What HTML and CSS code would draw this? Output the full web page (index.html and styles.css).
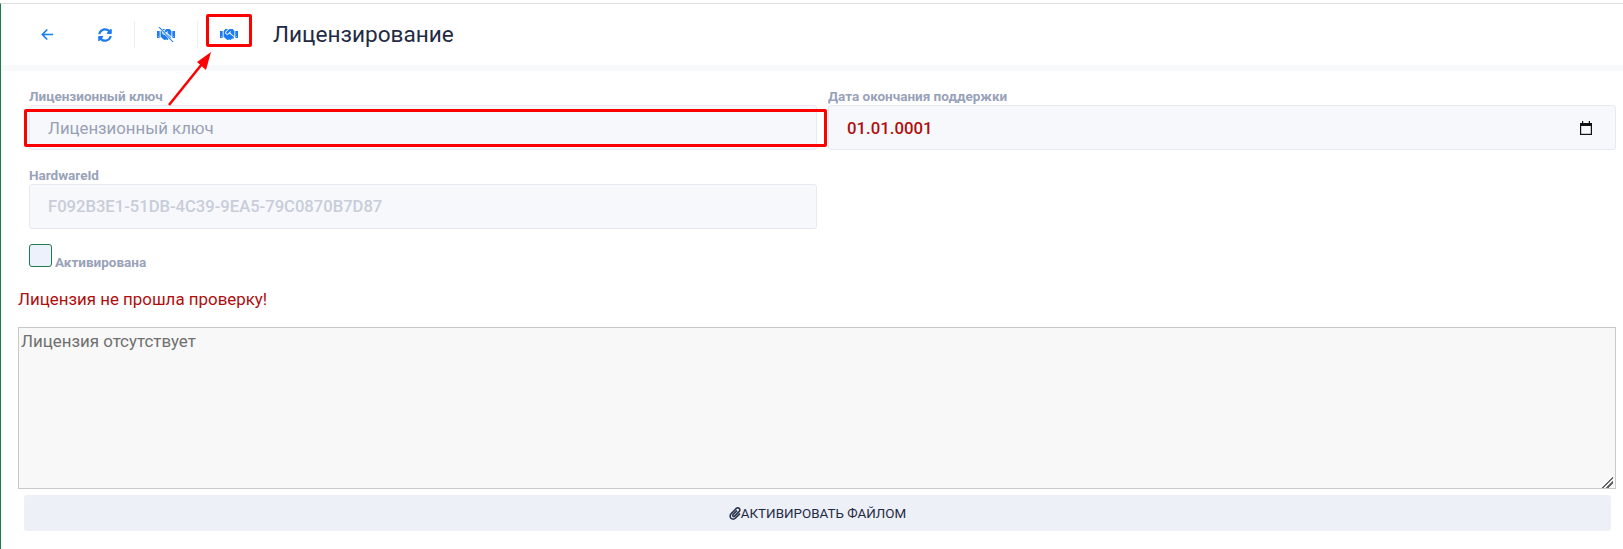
FILE: index.html
```html
<!DOCTYPE html>
<html lang="ru">
<head>
<meta charset="utf-8">
<title>Лицензирование</title>
<link rel="stylesheet" href="styles.css">
</head>
<body>
<div class="app">
  <header class="toolbar">
    <button class="tool tool-plain" type="button" aria-label="Назад">
      <svg class="icon-arrow" viewBox="0 0 12 12"><path d="M11.2 6H1.4M5.8 1.4 1.2 6l4.6 4.6"/></svg>
    </button>
    <button class="tool tool-plain" type="button" aria-label="Обновить">
      <svg class="icon-sync" viewBox="0 0 512 512"><path d="M370.72 133.28C339.458 104.008 298.888 87.962 255.848 88c-77.458.068-144.328 53.178-162.791 126.85-1.344 5.363-6.122 9.15-11.651 9.15H24.103c-7.498 0-13.194-6.807-11.807-14.176C33.933 94.924 134.813 8 256 8c66.448 0 126.791 26.136 171.315 68.685L463.03 40.97C478.149 25.851 504 36.559 504 57.941V192c0 13.255-10.745 24-24 24H345.941c-21.382 0-32.09-25.851-16.971-40.971l41.75-41.749zM32 296h134.059c21.382 0 32.09 25.851 16.971 40.971l-41.75 41.75c31.262 29.273 71.835 45.319 114.876 45.28 77.418-.07 144.315-53.144 162.787-126.849 1.344-5.363 6.122-9.15 11.651-9.15h57.304c7.498 0 13.193 6.807 11.807 14.176C478.067 417.076 377.187 504 256 504c-66.448 0-126.791-26.136-171.315-68.685L48.97 471.03C33.851 486.149 8 475.441 8 454.059V320c0-13.255 10.745-24 24-24z"/></svg>
    </button>
    <span class="sep"></span>
    <button class="tool tool-wide" type="button" aria-label="Деактивировать">
      <svg class="icon-hand" viewBox="0 0 640 512">
        <path d="M434.7 64h-85.9c-8 0-15.7 3-21.6 8.4l-98.3 90c-.1.1-.2.3-.3.4-16.6 15.6-16.3 40.5-2.1 56 12.7 13.9 39.4 17.6 56.1 2.7.1-.1.3-.1.4-.2l79.9-73.2c6.5-5.9 16.7-5.5 22.6 1 6 6.5 5.5 16.6-1 22.6l-26.1 23.9L504 313.8c2.9 2.4 5.5 5 7.9 7.7V128l-54.6-54.6c-5.9-6-14.1-9.4-22.6-9.4zM544 128.2v223.9c0 17.7 14.3 32 32 32h64V128.2h-96zm48 223.9c-8.8 0-16-7.2-16-16s7.2-16 16-16 16 7.2 16 16-7.2 16-16 16zM0 384h64c17.7 0 32-14.3 32-32V128.2H0V384zm48-63.9c8.8 0 16 7.2 16 16s-7.2 16-16 16-16-7.2-16-16c0-8.9 7.2-16 16-16zm435.9 18.6L334.6 217.5l-30 27.5c-29.7 27.1-75.2 24.5-101.7-4.4-26.9-29.4-24.8-74.9 4.4-101.7L289.1 64h-83.8c-8.5 0-16.6 3.4-22.6 9.4L128 128v223.9h18.3l90.5 81.9c27.4 22.3 67.7 18.1 90-9.3l.2-.2 17.9 15.5c15.9 13 39.4 10.5 52.3-5.4l31.4-38.6 5.4 4.4c13.7 11.1 33.9 9.1 45-4.7l9.5-11.7c11.2-13.8 9.1-33.9-4.6-45.1z"/>
        <path class="slash-halo" d="M60-20 580 532"/>
        <path class="slash" d="M60-20 580 532"/>
      </svg>
    </button>
    <span class="sep"></span>
    <button class="tool tool-wide" type="button" aria-label="Активировать">
      <svg class="icon-hand" viewBox="0 0 640 512"><path d="M434.7 64h-85.9c-8 0-15.7 3-21.6 8.4l-98.3 90c-.1.1-.2.3-.3.4-16.6 15.6-16.3 40.5-2.1 56 12.7 13.9 39.4 17.6 56.1 2.7.1-.1.3-.1.4-.2l79.9-73.2c6.5-5.9 16.7-5.5 22.6 1 6 6.5 5.5 16.6-1 22.6l-26.1 23.9L504 313.8c2.9 2.4 5.5 5 7.9 7.7V128l-54.6-54.6c-5.9-6-14.1-9.4-22.6-9.4zM544 128.2v223.9c0 17.7 14.3 32 32 32h64V128.2h-96zm48 223.9c-8.8 0-16-7.2-16-16s7.2-16 16-16 16 7.2 16 16-7.2 16-16 16zM0 384h64c17.7 0 32-14.3 32-32V128.2H0V384zm48-63.9c8.8 0 16 7.2 16 16s-7.2 16-16 16-16-7.2-16-16c0-8.9 7.2-16 16-16zm435.9 18.6L334.6 217.5l-30 27.5c-29.7 27.1-75.2 24.5-101.7-4.4-26.9-29.4-24.8-74.9 4.4-101.7L289.1 64h-83.8c-8.5 0-16.6 3.4-22.6 9.4L128 128v223.9h18.3l90.5 81.9c27.4 22.3 67.7 18.1 90-9.3l.2-.2 17.9 15.5c15.9 13 39.4 10.5 52.3-5.4l31.4-38.6 5.4 4.4c13.7 11.1 33.9 9.1 45-4.7l9.5-11.7c11.2-13.8 9.1-33.9-4.6-45.1z"/></svg>
    </button>
    <h1 class="title">Лицензирование</h1>
  </header>
  <div class="strip"></div>
  <main class="content">
    <div class="form-grid">
      <div class="field">
        <label class="field-label">Лицензионный ключ</label>
        <input class="field-input" type="text" placeholder="Лицензионный ключ">
      </div>
      <div class="field">
        <label class="field-label">Дата окончания поддержки</label>
        <div class="field-input date-input">
          <span>01.01.0001</span>
          <svg class="icon-cal" viewBox="0 0 14 14"><path class="cal-fill" d="M3 0h1.2v2H9.8V0H11v2h2v12H1V2h2z"/><rect class="cal-body" x="2.2" y="5" width="9.6" height="7.8"/></svg>
        </div>
      </div>
      <div class="field">
        <label class="field-label">HardwareId</label>
        <input class="field-input hardware" type="text" value="F092B3E1-51DB-4C39-9EA5-79C0870B7D87" disabled>
      </div>
    </div>
    <div class="check-row">
      <span class="check-box"></span>
      <span class="check-label">Активирована</span>
    </div>
    <p class="error">Лицензия не прошла проверку!</p>
    <textarea class="details" disabled>Лицензия отсутствует</textarea>
    <button class="activate" type="button">
      <svg class="icon-clip" viewBox="0 0 448 512"><path d="M43.246 466.142c-58.43-60.289-57.341-157.511 1.386-217.581L254.392 34c44.316-45.332 116.351-45.336 160.671 0 43.89 44.894 43.943 117.329 0 162.276L232.214 383.128c-29.855 30.537-78.633 30.111-107.982-.998-28.275-29.97-27.368-77.473 1.452-106.953l143.743-146.835c6.182-6.314 16.312-6.422 22.626-.241l22.861 22.379c6.315 6.182 6.422 16.312.241 22.626L171.427 319.927c-4.932 5.045-5.236 13.428-.648 18.292 4.372 4.634 11.245 4.711 15.688.165l182.849-186.851c19.613-20.062 19.613-52.725-.011-72.798-19.189-19.627-49.957-19.637-69.154 0L90.39 293.295c-34.763 35.56-35.299 93.12-1.191 128.313 34.01 35.093 88.985 35.137 123.058.286l172.06-175.999c6.177-6.319 16.307-6.433 22.626-.256l22.877 22.364c6.319 6.177 6.434 16.307.256 22.626l-172.06 175.998c-59.576 60.938-155.943 60.216-214.77-.485z"/></svg>АКТИВИРОВАТЬ ФАЙЛОМ
    </button>
  </main>
  <div class="mark mark-tool"></div>
  <div class="mark mark-key"></div>
  <svg class="mark-arrow" viewBox="0 0 60 70"><path class="arrow-line" d="M8 60 41 19"/><path class="arrow-head" d="M50 7 45 25 36 17z"/></svg>
</div>
</body>
</html>
```

FILE: styles.css
```css
* {
  box-sizing: border-box;
}

html,
body {
  margin: 0;
  height: 100%;
  background: #fff;
}

body {
  padding-top: 3px;
  font-family: Roboto, "Liberation Sans", sans-serif;
  overflow: hidden;
}

.app {
  position: relative;
  height: 546px;
  border-top: 1px solid #e0e0e0;
  border-left: 1px solid #1f7a4d;
}

.toolbar {
  display: flex;
  align-items: center;
  height: 61px;
  padding: 0 0 0 17px;
}

.tool {
  display: flex;
  align-items: center;
  justify-content: center;
  height: 28px;
  padding: 0;
  border: 0;
  background: transparent;
  cursor: pointer;
}

.tool-plain {
  width: 58px;
}

.tool-wide {
  width: 62px;
}

.tool svg {
  fill: #1a7cf0;
}

.tool .icon-arrow {
  width: 13px;
  height: 13px;
  fill: none;
  stroke: #1a7cf0;
  stroke-width: 1.5;
}

.icon-sync {
  width: 14px;
  height: 14px;
}

.icon-hand {
  width: 18px;
  height: 15px;
}

.slash-halo {
  fill: none;
  stroke: #fff;
  stroke-width: 75;
}

.slash {
  fill: none;
  stroke: #1a7cf0;
  stroke-width: 38;
}

.sep {
  width: 1px;
  height: 27px;
  background: #eceef2;
}

.title {
  margin: 0 0 0 13px;
  font-size: 22.6px;
  font-weight: 400;
  line-height: 28px;
  color: #1f2a44;
}

.strip {
  height: 6px;
  background: #f8f9fa;
}

.content {
  display: flex;
  flex-direction: column;
  align-items: flex-start;
  padding: 16px 0 0 17px;
}

.form-grid {
  display: grid;
  grid-template-columns: 788px 788px;
  column-gap: 11px;
  row-gap: 16px;
  margin-left: 11px;
}

.field {
  display: flex;
  flex-direction: column;
}

.field-label {
  height: 18px;
  font-size: 13.5px;
  font-weight: 700;
  line-height: 19px;
  color: #98a2b8;
}

.field-input {
  width: 100%;
  height: 45px;
  padding: 0 18px;
  border: 1px solid #e6e9f2;
  border-radius: 3px;
  background: #f7f8fc;
  font-family: inherit;
  font-size: 16.8px;
  color: #1f2a44;
  outline: none;
}

.field-input::placeholder {
  color: #98a1b3;
  opacity: 1;
}

.field-input:disabled {
  color: #c8cdd9;
}

.hardware {
  font-size: 16.6px;
  font-weight: 500;
}

.date-input {
  display: flex;
  align-items: center;
  justify-content: space-between;
  padding-right: 22px;
  font-weight: 500;
  color: #b00d0d;
}

.icon-cal {
  width: 14px;
  height: 14px;
}

.cal-fill {
  fill: #111;
}

.cal-body {
  fill: #f7f8fc;
}

.check-row {
  display: flex;
  align-items: flex-end;
  gap: 3px;
  margin: 15px 0 0 11px;
}

.check-box {
  width: 23px;
  height: 23px;
  border: 1px solid #1f7a4d;
  border-radius: 3px;
  background: #edf1fb;
}

.check-label {
  margin-bottom: -3px;
  font-size: 13.5px;
  font-weight: 700;
  line-height: 16px;
  color: #98a2b8;
}

.error {
  margin: 22px 0 0;
  font-size: 16.9px;
  line-height: 20px;
  color: #b00d0d;
}

.details {
  display: block;
  width: 1598px;
  height: 162px;
  margin-top: 18px;
  padding: 3px 2px;
  border: 1px solid #c9c9c9;
  background: #f8f8f8;
  font-family: inherit;
  font-size: 16.9px;
  line-height: 20px;
  color: #6f6f6f;
}

.details::-webkit-resizer {
  background: linear-gradient(135deg, transparent 54%, #666 54%, #666 62%, transparent 62%, transparent 73%, #666 73%, #666 81%, transparent 81%) left bottom / 13px 13px no-repeat;
}

.activate {
  display: flex;
  align-items: center;
  justify-content: center;
  width: 1587px;
  height: 36px;
  margin: 6px 0 0 6px;
  padding: 0;
  border: 0;
  border-radius: 3px;
  background: #edf0f7;
  font-family: inherit;
  font-size: 13.4px;
  color: #1f2a44;
  cursor: pointer;
}

.icon-clip {
  width: 12px;
  height: 13px;
  fill: #2d3750;
}

.mark {
  position: absolute;
  border: 3px solid #f00;
  border-radius: 2px;
  pointer-events: none;
}

.mark-tool {
  left: 205px;
  top: 10px;
  width: 46px;
  height: 33px;
}

.mark-key {
  left: 23px;
  top: 105px;
  width: 803px;
  height: 38px;
}

.mark-arrow {
  position: absolute;
  left: 160px;
  top: 41px;
  width: 60px;
  height: 70px;
  pointer-events: none;
}

.arrow-line {
  fill: none;
  stroke: #f00;
  stroke-width: 2.5;
}

.arrow-head {
  fill: #f00;
}
```
